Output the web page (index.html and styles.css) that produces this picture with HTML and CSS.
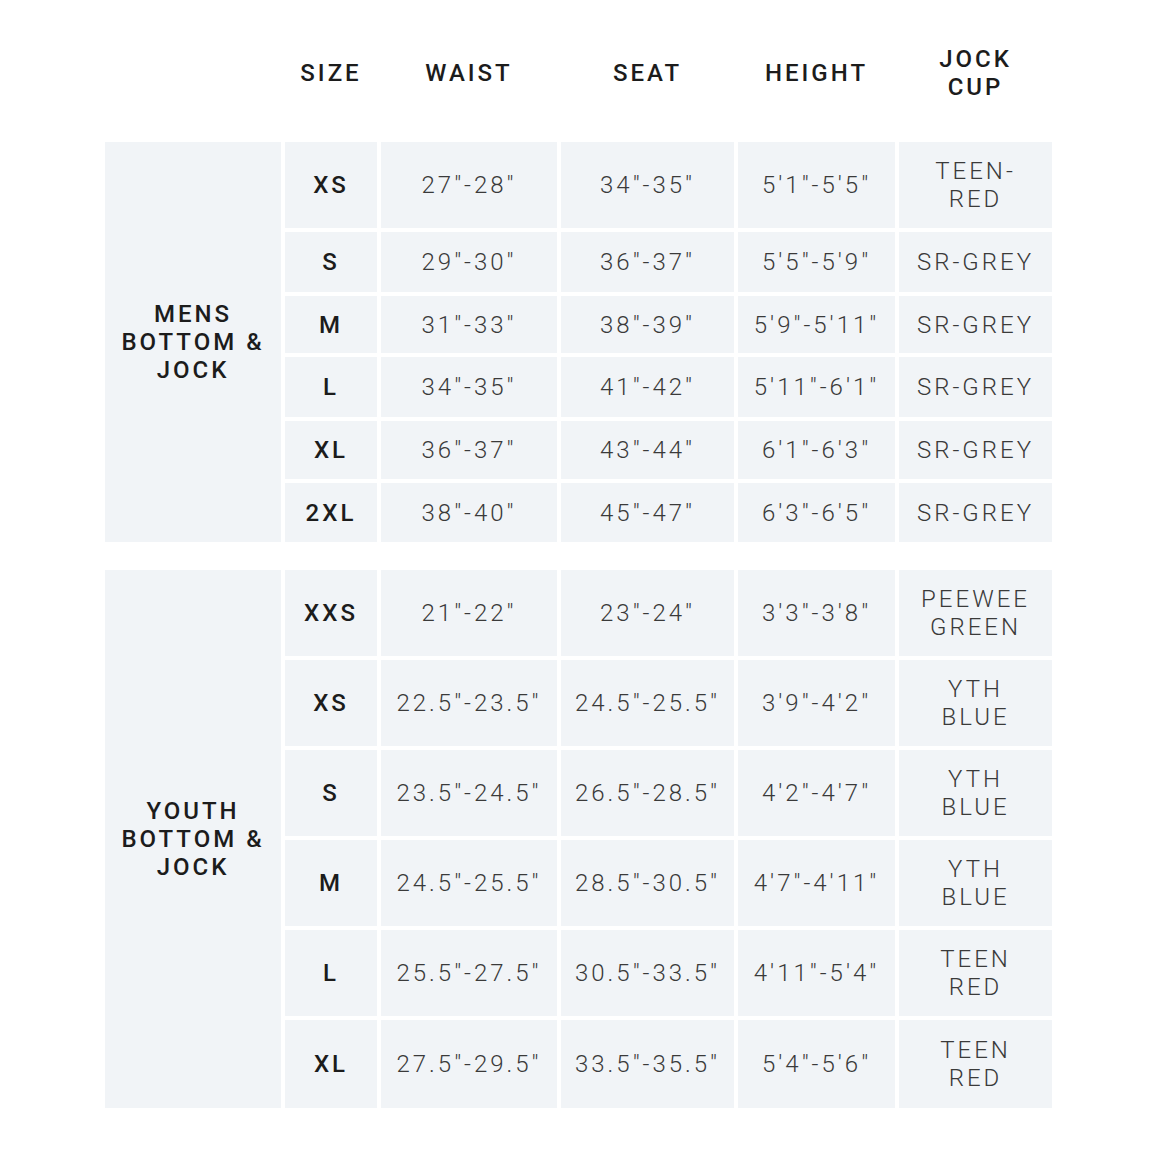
FILE: index.html
```html
<!DOCTYPE html>
<html>
<head>
<meta charset="utf-8">
<link rel="stylesheet" href="styles.css">
</head>
<body>
<div class="chart">
  <div class="head">
    <div class="hcell"></div>
    <div class="hcell">SIZE</div>
    <div class="hcell">WAIST</div>
    <div class="hcell">SEAT</div>
    <div class="hcell">HEIGHT</div>
    <div class="hcell">JOCK<br>CUP</div>
  </div>

  <div class="section mens">
    <div class="cell cat">MENS<br>BOTTOM &amp;<br>JOCK</div>
    <div class="cell size">XS</div><div class="cell val">27"-28"</div><div class="cell val">34"-35"</div><div class="cell val">5'1"-5'5"</div><div class="cell val">TEEN-<br>RED</div>
    <div class="cell size">S</div><div class="cell val">29"-30"</div><div class="cell val">36"-37"</div><div class="cell val">5'5"-5'9"</div><div class="cell val">SR-GREY</div>
    <div class="cell size">M</div><div class="cell val">31"-33"</div><div class="cell val">38"-39"</div><div class="cell val">5'9"-5'11"</div><div class="cell val">SR-GREY</div>
    <div class="cell size">L</div><div class="cell val">34"-35"</div><div class="cell val">41"-42"</div><div class="cell val">5'11"-6'1"</div><div class="cell val">SR-GREY</div>
    <div class="cell size">XL</div><div class="cell val">36"-37"</div><div class="cell val">43"-44"</div><div class="cell val">6'1"-6'3"</div><div class="cell val">SR-GREY</div>
    <div class="cell size">2XL</div><div class="cell val">38"-40"</div><div class="cell val">45"-47"</div><div class="cell val">6'3"-6'5"</div><div class="cell val">SR-GREY</div>
  </div>

  <div class="section youth">
    <div class="cell cat">YOUTH<br>BOTTOM &amp;<br>JOCK</div>
    <div class="cell size">XXS</div><div class="cell val">21"-22"</div><div class="cell val">23"-24"</div><div class="cell val">3'3"-3'8"</div><div class="cell val">PEEWEE<br>GREEN</div>
    <div class="cell size">XS</div><div class="cell val">22.5"-23.5"</div><div class="cell val">24.5"-25.5"</div><div class="cell val">3'9"-4'2"</div><div class="cell val">YTH<br>BLUE</div>
    <div class="cell size">S</div><div class="cell val">23.5"-24.5"</div><div class="cell val">26.5"-28.5"</div><div class="cell val">4'2"-4'7"</div><div class="cell val">YTH<br>BLUE</div>
    <div class="cell size">M</div><div class="cell val">24.5"-25.5"</div><div class="cell val">28.5"-30.5"</div><div class="cell val">4'7"-4'11"</div><div class="cell val">YTH<br>BLUE</div>
    <div class="cell size">L</div><div class="cell val">25.5"-27.5"</div><div class="cell val">30.5"-33.5"</div><div class="cell val">4'11"-5'4"</div><div class="cell val">TEEN<br>RED</div>
    <div class="cell size">XL</div><div class="cell val">27.5"-29.5"</div><div class="cell val">33.5"-35.5"</div><div class="cell val">5'4"-5'6"</div><div class="cell val">TEEN<br>RED</div>
  </div>
</div>
</body>
</html>
```

FILE: styles.css
```css
html, body {
  margin: 0;
  padding: 0;
  background: #ffffff;
}

body {
  font-family: Roboto, "Liberation Sans", sans-serif;
  font-size: 24px;
  line-height: 28px;
  letter-spacing: 3px;
}

.chart {
  padding: 38px 0 0 105px;
  display: flex;
  flex-direction: column;
}

.head,
.section {
  display: grid;
  grid-template-columns: 176px 92px 176px 173px 157px 153px;
  column-gap: 4px;
  row-gap: 4px;
}

.head {
  height: 70px;
  margin-bottom: 34px;
}

.hcell {
  display: flex;
  align-items: center;
  justify-content: center;
  text-align: center;
  font-weight: 500;
  color: #1c1c1c;
}

.mens {
  grid-template-rows: 86px 60px 57px 60px 58px 59px;
  margin-bottom: 28px;
}

.youth {
  grid-template-rows: 86px 86px 86px 86px 86px 88px;
}

.cell {
  background: #f1f4f7;
  display: flex;
  align-items: center;
  justify-content: center;
  text-align: center;
}

.cat {
  grid-row: 1 / -1;
  grid-column: 1;
  font-weight: 500;
  color: #1c1c1c;
}

.size {
  font-weight: 500;
  color: #1c1c1c;
}

.val {
  font-weight: 300;
  color: #3a3a3a;
}
```
